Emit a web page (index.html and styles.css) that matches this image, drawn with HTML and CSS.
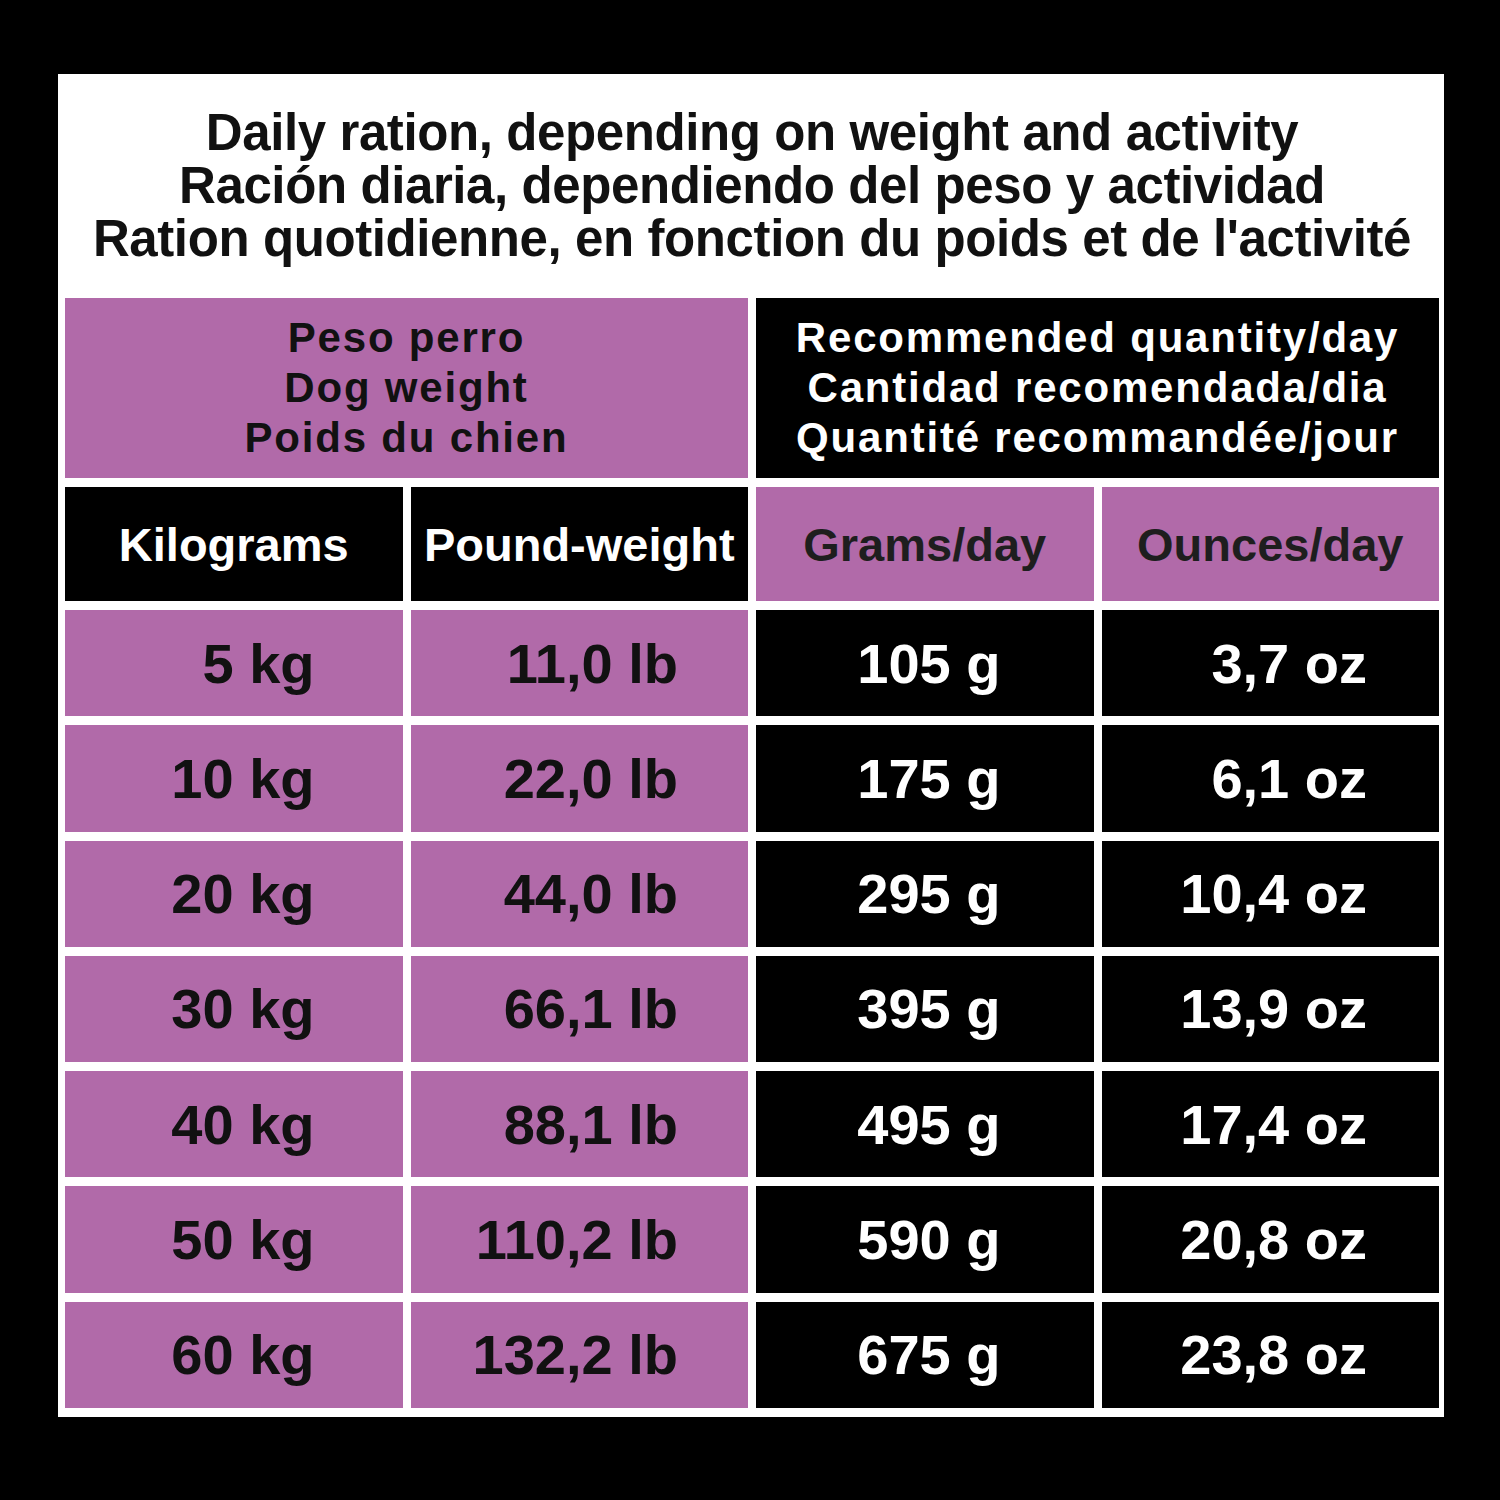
FILE: index.html
```html
<!DOCTYPE html>
<html lang="en">
<head>
<meta charset="utf-8">
<title>Daily ration</title>
<link rel="stylesheet" href="styles.css">
</head>
<body>
<div class="panel">
  <div class="title">
    <div>Daily ration, depending on weight and activity</div>
    <div>Ración diaria, dependiendo del peso y actividad</div>
    <div>Ration quotidienne, en fonction du poids et de l'activité</div>
  </div>
  <div class="table">
    <div class="cell head purple span2">
      <div>Peso perro</div>
      <div>Dog weight</div>
      <div>Poids du chien</div>
    </div>
    <div class="cell head black span2">
      <div>Recommended quantity/day</div>
      <div>Cantidad recomendada/dia</div>
      <div>Quantité recommandée/jour</div>
    </div>
    <div class="cell sub black">Kilograms</div>
    <div class="cell sub black">Pound-weight</div>
    <div class="cell sub purple grey">Grams/day</div>
    <div class="cell sub purple grey">Ounces/day</div>

    <div class="cell val purple c1">5 kg</div>
    <div class="cell val purple c2">11,0 lb</div>
    <div class="cell val black c3">105 g</div>
    <div class="cell val black c4">3,7 oz</div>

    <div class="cell val purple c1">10 kg</div>
    <div class="cell val purple c2">22,0 lb</div>
    <div class="cell val black c3">175 g</div>
    <div class="cell val black c4">6,1 oz</div>

    <div class="cell val purple c1">20 kg</div>
    <div class="cell val purple c2">44,0 lb</div>
    <div class="cell val black c3">295 g</div>
    <div class="cell val black c4">10,4 oz</div>

    <div class="cell val purple c1">30 kg</div>
    <div class="cell val purple c2">66,1 lb</div>
    <div class="cell val black c3">395 g</div>
    <div class="cell val black c4">13,9 oz</div>

    <div class="cell val purple c1">40 kg</div>
    <div class="cell val purple c2">88,1 lb</div>
    <div class="cell val black c3">495 g</div>
    <div class="cell val black c4">17,4 oz</div>

    <div class="cell val purple c1">50 kg</div>
    <div class="cell val purple c2">110,2 lb</div>
    <div class="cell val black c3">590 g</div>
    <div class="cell val black c4">20,8 oz</div>

    <div class="cell val purple c1">60 kg</div>
    <div class="cell val purple c2">132,2 lb</div>
    <div class="cell val black c3">675 g</div>
    <div class="cell val black c4">23,8 oz</div>
  </div>
</div>
</body>
</html>
```
FILE: styles.css
```css
html, body {
  margin: 0;
  padding: 0;
  background: #000;
}
body {
  width: 1500px;
  height: 1500px;
  padding-top: 74px;
  padding-left: 58px;
  box-sizing: border-box;
  font-family: "Liberation Sans", Arial, sans-serif;
  font-weight: 700;
}
.panel {
  width: 1386px;
  height: 1343px;
  background: #fff;
  box-sizing: border-box;
  padding: 0 5px 9px 7px;
  display: flex;
  flex-direction: column;
}
.title {
  height: 224px;
  box-sizing: border-box;
  padding-top: 32px;
  text-align: center;
  font-size: 51px;
  line-height: 53px;
  letter-spacing: -0.4px;
  color: #111;
}
.table {
  display: grid;
  grid-template-columns: repeat(4, 1fr);
  grid-template-rows: 180px 114px repeat(7, 1fr);
  column-gap: 8px;
  row-gap: 9px;
  flex: 1;
}
.cell {
  display: flex;
  align-items: center;
}
.span2 {
  grid-column: span 2;
}
.purple {
  background: #b16aa9;
  color: #111;
}
.black {
  background: #000;
  color: #fff;
}
.head {
  flex-direction: column;
  justify-content: center;
  text-align: center;
  font-size: 42px;
  line-height: 50px;
  letter-spacing: 1.8px;
}
.sub {
  justify-content: center;
  font-size: 47px;
}
.grey {
  color: #1e1e1e;
}
.val {
  justify-content: flex-end;
  font-size: 56px;
}
.c1 { padding-right: 88px; }
.c2 { padding-right: 70px; }
.c3 { padding-right: 93px; }
.c4 { padding-right: 72px; }
```
